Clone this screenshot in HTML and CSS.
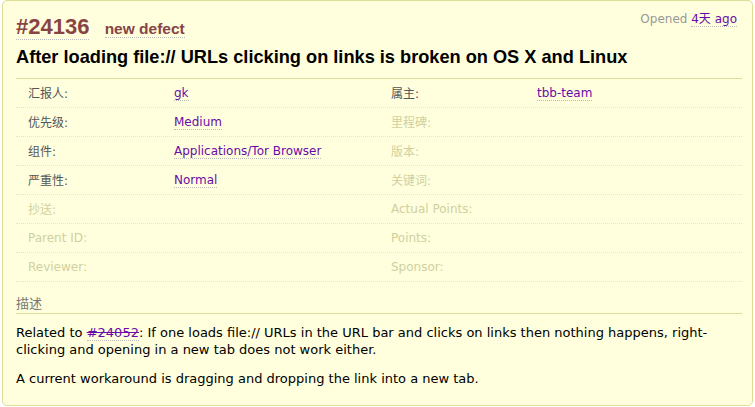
FILE: index.html
```html
<!DOCTYPE html>
<html lang="zh">
<head>
    <meta charset="UTF-8">
    <title>#24136 new defect</title>
    <link rel="stylesheet" href="styles.css">
</head>
<body>
<div class="ticket">
    <div class="ticket-head">
        <h1>
            <span class="trac-id">#24136</span>
            <span class="trac-type">new defect</span>
        </h1>
        <div class="date">Opened <a href="#">4天 ago</a></div>
    </div>
    <h2 class="summary">After loading file:// URLs clicking on links is broken on OS X and Linux</h2>

    <div class="props">
        <div class="prop-row">
            <div class="label">汇报人:</div>
            <div class="value"><a href="#">gk</a></div>
            <div class="label">属主:</div>
            <div class="value"><a href="#">tbb-team</a></div>
        </div>
        <div class="prop-row">
            <div class="label">优先级:</div>
            <div class="value"><a href="#">Medium</a></div>
            <div class="label missing">里程碑:</div>
            <div class="value"></div>
        </div>
        <div class="prop-row">
            <div class="label">组件:</div>
            <div class="value"><a href="#">Applications/Tor Browser</a></div>
            <div class="label missing">版本:</div>
            <div class="value"></div>
        </div>
        <div class="prop-row">
            <div class="label">严重性:</div>
            <div class="value"><a href="#">Normal</a></div>
            <div class="label missing">关键词:</div>
            <div class="value"></div>
        </div>
        <div class="prop-row">
            <div class="label missing">抄送:</div>
            <div class="value"></div>
            <div class="label missing">Actual Points:</div>
            <div class="value"></div>
        </div>
        <div class="prop-row">
            <div class="label missing">Parent ID:</div>
            <div class="value"></div>
            <div class="label missing">Points:</div>
            <div class="value"></div>
        </div>
        <div class="prop-row">
            <div class="label missing">Reviewer:</div>
            <div class="value"></div>
            <div class="label missing">Sponsor:</div>
            <div class="value"></div>
        </div>
    </div>

    <div class="description">
        <h3>描述</h3>
        <p>Related to <a href="#" class="closed">#24052</a>: If one loads file:// URLs in the URL bar and clicks on links then nothing happens, right-clicking and opening in a new tab does not work either.</p>
        <p>A current workaround is dragging and dropping the link into a new tab.</p>
    </div>
</div>
</body>
</html>
```

FILE: styles.css
```css
* {
    box-sizing: border-box;
    margin: 0;
    padding: 0;
}

body {
    background-color: #fff;
    color: #000;
    font-family: 'DejaVu Sans', Verdana, 'Noto Sans CJK SC', sans-serif;
    font-size: 13px;
}

a {
    color: #6a0aa8;
    text-decoration: none;
    border-bottom: 1px dotted #bbb;
}

.ticket {
    margin: 0 2px;
    height: 406px;
    background-color: #ffd;
    border: 1px solid #dd9;
    border-radius: 5px;
    padding: 0 10px 0 13px;
}

.ticket-head {
    display: flex;
    justify-content: space-between;
    align-items: flex-start;
}

.ticket-head h1 {
    font-family: 'Liberation Sans', Arial, sans-serif;
    font-weight: bold;
    padding-top: 11px;
    line-height: 26px;
}

.trac-id {
    color: #844;
    font-size: 22px;
    border-bottom: 1px dotted #bbb;
}

.trac-type {
    color: #844;
    font-size: 15.5px;
    margin-left: 8px;
    border-bottom: 1px dotted #bbb;
}

.date {
    color: #999;
    font-size: 12px;
    padding-top: 8px;
    padding-right: 5px;
}

.summary {
    font-family: 'Liberation Sans', Arial, sans-serif;
    font-size: 18.2px;
    font-weight: bold;
    line-height: 22px;
    padding: 4px 0 10px;
    border-bottom: 1px solid #dd9;
}

.props {
    font-size: 12px;
}

.prop-row {
    display: grid;
    grid-template-columns: 158px 205px 158px 205px;
    height: 29px;
    align-items: center;
    padding-bottom: 1px;
    border-bottom: 1px dotted #e6e6c0;
}

.label {
    padding-left: 12px;
    color: #555;
}

.label.missing {
    color: #d0d0a0;
}

.description h3 {
    font-size: 13px;
    font-weight: normal;
    color: #777;
    margin-top: 11px;
    padding-bottom: 1px;
    border-bottom: 1px solid #dd9;
}

.description p {
    line-height: 17px;
    margin-top: 10px;
}

.description p + p {
    margin-top: 12px;
}

a.closed {
    text-decoration: line-through;
}
```
